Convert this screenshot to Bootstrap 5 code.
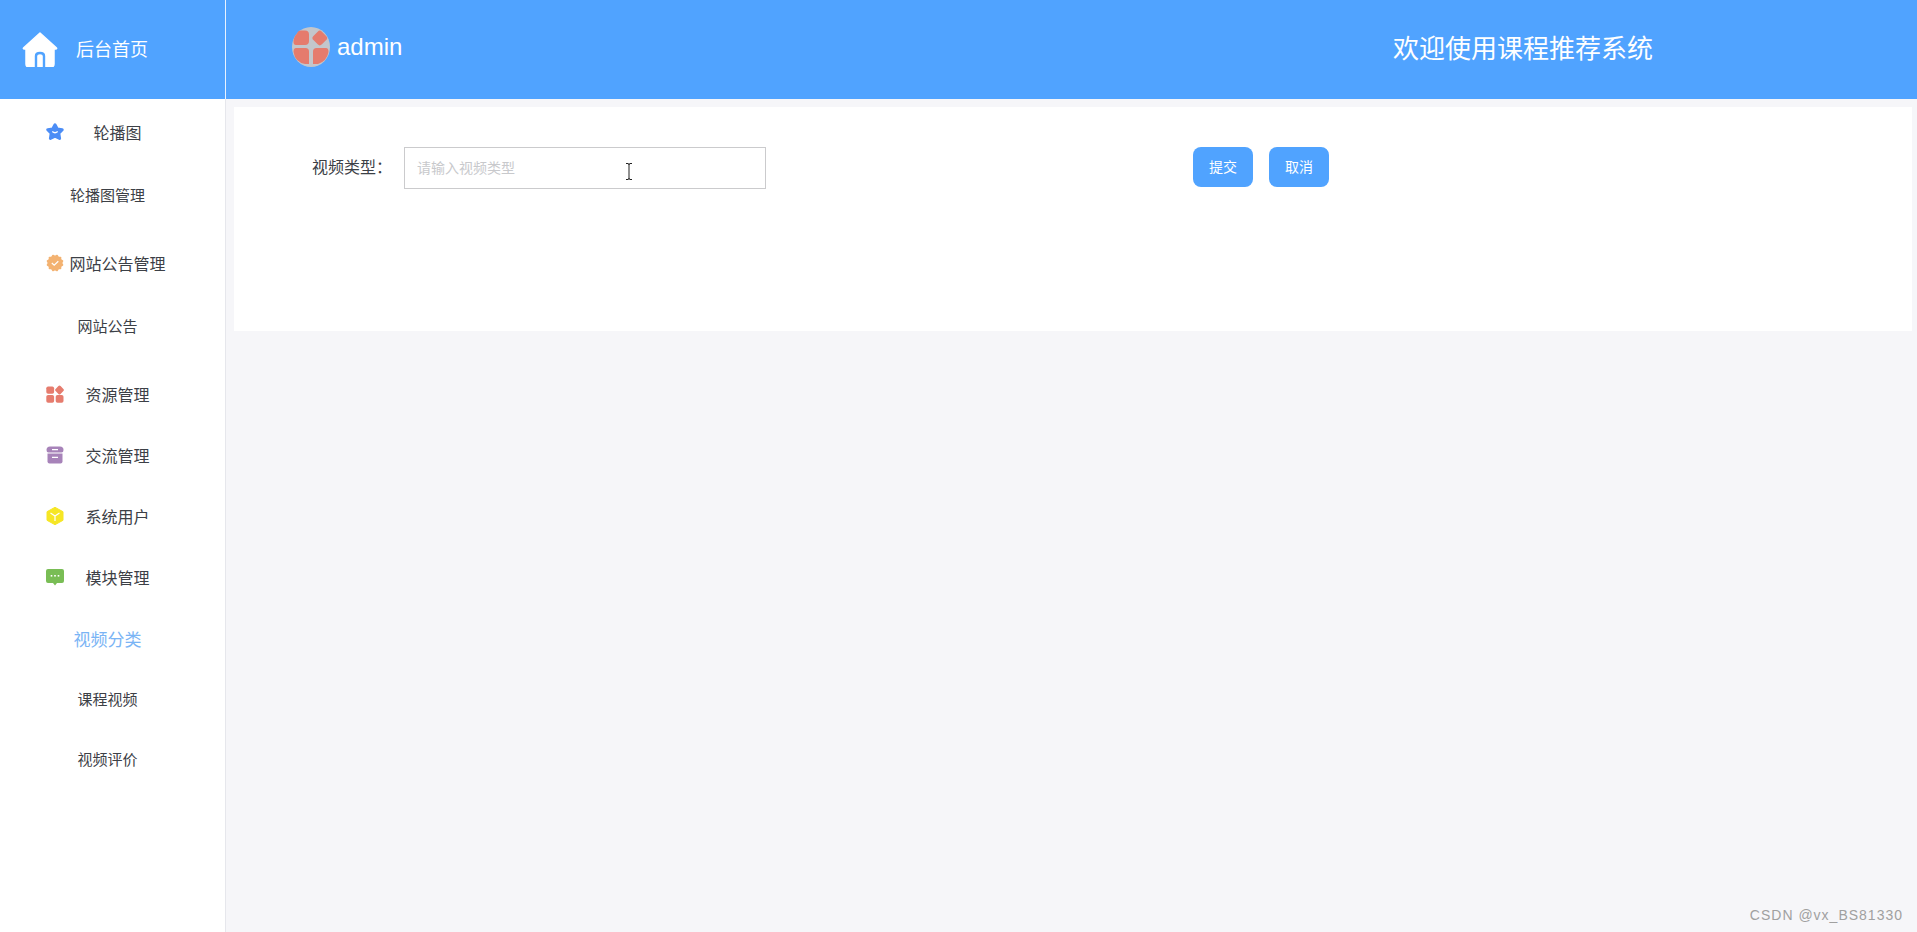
<!DOCTYPE html>
<html lang="zh-CN">
<head>
    <meta charset="UTF-8">
    <meta name="viewport" content="width=device-width, initial-scale=1.0">
    <title>后台首页</title>
    <link href="https://cdn.jsdelivr.net/npm/bootstrap@5.3.0/dist/css/bootstrap.min.css" rel="stylesheet">
    <style>
        body { font-family: "Liberation Sans", "Noto Sans CJK SC", sans-serif; background: #f6f6f9; color: #3c4046; }
        .top-bar { height: 99px; background: #50a3ff; color: #fff; }
        .brand-box { width: 226px; padding-left: 22px; padding-top: 1px; gap: 18px; font-size: 18px; border-right: 1px solid #e8f2ff; }
        .brand-box svg { margin-top: -3px; }
        .user-box { margin-left: 66px; gap: 7px; padding-bottom: 5px; font-size: 24px; }
        .top-title { margin-left: auto; margin-right: 264px; font-size: 26px; }
        .side-menu { width: 226px; background: #fff; border-right: 1px solid #e6e7ec; padding-top: 4px; }
        .menu-row { height: 61px; color: #3c4046; font-size: 16px; text-decoration: none; padding: 0; }
        .menu-tall { height: 62px; }
        .menu-short { height: 60px; }
        .menu-gap { margin-top: 7px; }
        .menu-top { padding-left: 46px; }
        .menu-top svg { width: 18px; height: 18px; flex: none; margin-top: -4px; }
        .menu-label { width: 107px; text-align: center; }
        .menu-sub { width: 215px; justify-content: center; font-size: 15px; }
        .menu-active { color: #7ab4f5; font-size: 17px; padding-top: 2px; }
        .main-area { padding: 8px 5px 0 8px; }
        .form-panel { height: 224px; background: #fff; padding: 40px 0 0 78px; }
        .field-label { width: 92px; height: 42px; font-size: 16px; }
        .field-wrap { width: 362px; }
        .type-input { height: 42px; border: 1px solid #cbcbcd; border-radius: 0; padding: 0 12px; font-size: 14px; }
        .type-input::placeholder { color: #c8c9cc; }
        .text-cursor { position: absolute; left: 221px; top: 16px; width: 8px; height: 17px; }
        .panel-btn { width: 60px; height: 40px; padding: 0; background: #50a3ff; color: #fff; border: 0; border-radius: 8px; font-size: 14px; }
        .btn-group-gap { margin-left: 427px; gap: 16px; }
        .water-mark { position: absolute; right: 14px; bottom: 6px; color: #a0a0a0; font-size: 14px; letter-spacing: 1px; }
    </style>
</head>
<body>
<div class="d-flex flex-column vh-100 overflow-hidden position-relative">
    <header class="top-bar d-flex align-items-stretch flex-shrink-0">
        <div class="brand-box d-flex align-items-center">
            <svg width="36" height="36" viewBox="0 0 36 36">
                <path d="M18 2 L34 16.5 Q35.5 18 33.5 18 L32 18 L32 33 Q32 36 29 36 L7 36 Q4 36 4 33 L4 18 L2.5 18 Q0.5 18 2 16.5 Z" fill="#fff" stroke="#fff" stroke-linejoin="round" stroke-width="1.5"/>
                <path d="M14 36 L14 25 Q14 22 18 22 Q22 22 22 25 L22 36" fill="none" stroke="#50a3ff" stroke-width="2.4"/>
            </svg>
            <span>后台首页</span>
        </div>
        <div class="user-box d-flex align-items-center">
            <svg width="38" height="40" viewBox="0 0 38 40">
                <ellipse cx="19" cy="20" rx="19" ry="20" fill="#c3c6cb"/>
                <path d="M5 6.500 Q6 3.500 9 3.500 L13 3.500 Q17 3.500 17 7.500 L17 14 Q17 18 13 18 L4 18 Q1.500 18 1.500 15 Q1.500 10 5 6.500 Z" fill="#e57b6d"/>
                <rect x="21.800" y="5" width="12" height="12" rx="3" fill="#e57b6d" transform="rotate(45 27.800 11)"/>
                <path d="M4 21 L13.500 21 Q17 21 17 24.500 L17 37 L13 37 Q3 35 1.500 25 Q1.500 21 4 21 Z" fill="#e57b6d"/>
                <path d="M21 24.500 Q21 21 24.500 21 L34 21 Q36.500 21 36.500 25 Q35 34 26 37 L21 37 Z" fill="#e57b6d"/>
            </svg>
            <span>admin</span>
        </div>
        <div class="top-title d-flex align-items-center">欢迎使用课程推荐系统</div>
    </header>
    <div class="d-flex flex-grow-1">
        <nav class="side-menu nav flex-column flex-nowrap flex-shrink-0">
            <a href="#" class="menu-row menu-tall menu-top d-flex align-items-center">
                <svg viewBox="0 0 18 18"><path d="M9 1.800 L11.300 5.900 L16.200 6.700 L12.800 10.300 L13.600 15.400 L9 13.200 L4.400 15.400 L5.200 10.300 L1.800 6.700 L6.700 5.900 Z" fill="#4c8df6" stroke="#4c8df6" stroke-width="3" stroke-linejoin="round"/><path d="M6.300 8.500 Q9 11 11.700 8.500" fill="none" stroke="#fff" stroke-width="1.200"/></svg>
                <span class="menu-label">轮播图</span>
            </a>
            <a href="#" class="menu-row menu-tall menu-sub d-flex align-items-center">轮播图管理</a>
            <a href="#" class="menu-row menu-tall menu-gap menu-top d-flex align-items-center">
                <svg viewBox="0 0 18 18"><g fill="#f3b271"><rect x="2.700" y="2.700" width="12.600" height="12.600" rx="0.800"/><rect x="2.700" y="2.700" width="12.600" height="12.600" rx="0.800" transform="rotate(30 9 9)"/><rect x="2.700" y="2.700" width="12.600" height="12.600" rx="0.800" transform="rotate(60 9 9)"/></g><path d="M5.800 9 L8.200 11.200 L12.300 7.200" fill="none" stroke="#fff" stroke-width="1.200"/></svg>
                <span class="menu-label">网站公告管理</span>
            </a>
            <a href="#" class="menu-row menu-tall menu-sub d-flex align-items-center">网站公告</a>
            <a href="#" class="menu-row menu-gap menu-top d-flex align-items-center">
                <svg viewBox="0 0 18 18"><g fill="#e67c6e"><rect x="0.300" y="1.500" width="7.800" height="7.300" rx="1.800"/><rect x="0.300" y="10" width="7.800" height="7.800" rx="1.800"/><rect x="9.700" y="10" width="7.800" height="7.800" rx="1.800"/><rect x="10" y="1.500" width="7" height="7" rx="1.500" transform="rotate(45 13.500 5)"/></g></svg>
                <span class="menu-label">资源管理</span>
            </a>
            <a href="#" class="menu-row menu-top d-flex align-items-center">
                <svg viewBox="0 0 18 18"><path d="M4 0.500 L14 0.500 Q17.500 0.500 17.500 4 Q17.500 6.500 15.500 6.500 L2.500 6.500 Q0.500 6.500 0.500 4 Q0.500 0.500 4 0.500 Z" fill="#a783b9"/><path d="M1.500 7.500 L16.500 7.500 L16.500 15.500 Q16.500 17.500 14.500 17.500 L3.500 17.500 Q1.500 17.500 1.500 15.500 Z" fill="#a783b9"/><path d="M6 3.600 L12 3.600 M6 11.400 L12 11.400" stroke="#fff" stroke-width="1.200"/></svg>
                <span class="menu-label">交流管理</span>
            </a>
            <a href="#" class="menu-row menu-top d-flex align-items-center">
                <svg viewBox="0 0 18 18"><polygon points="9,0.300 17,4.700 17,13.300 9,17.700 1,13.300 1,4.700" fill="#f6e625" stroke="#f6e625" stroke-linejoin="round"/><path d="M4.500 6 L9 9 L13.500 6 M9 9 L9 14" fill="none" stroke="#fff" stroke-width="1.200"/></svg>
                <span class="menu-label">系统用户</span>
            </a>
            <a href="#" class="menu-row menu-top d-flex align-items-center">
                <svg viewBox="0 0 18 18"><path d="M2 1 L16 1 Q18 1 18 3 L18 13 Q18 15 16 15 L11 15 L9 17.500 L7 15 L2 15 Q0 15 0 13 L0 3 Q0 1 2 1 Z" fill="#79bd55"/><g fill="#fff"><rect x="4.700" y="7" width="1.600" height="1.600"/><rect x="8.200" y="7" width="1.600" height="1.600"/><rect x="11.700" y="7" width="1.600" height="1.600"/></g></svg>
                <span class="menu-label">模块管理</span>
            </a>
            <a href="#" class="menu-row menu-sub menu-active d-flex align-items-center">视频分类</a>
            <a href="#" class="menu-row menu-short menu-sub d-flex align-items-center">课程视频</a>
            <a href="#" class="menu-row menu-short menu-sub d-flex align-items-center">视频评价</a>
        </nav>
        <main class="main-area flex-grow-1">
            <form class="form-panel d-flex align-items-start">
                <label class="field-label d-flex align-items-center">视频类型：</label>
                <div class="field-wrap position-relative">
                    <input type="text" class="type-input form-control" placeholder="请输入视频类型">
                    <svg class="text-cursor" viewBox="0 0 8 17"><path d="M1 0.500 L3 0.500 Q4 0.500 4 2 L4 15 Q4 16.500 3 16.500 L1 16.500 M7 0.500 L5 0.500 Q4 0.500 4 2 M4 15 Q4 16.500 5 16.500 L7 16.500" fill="none" stroke="#222" stroke-width="1"/></svg>
                </div>
                <div class="btn-group-gap d-flex">
                    <button type="button" class="btn panel-btn">提交</button>
                    <button type="button" class="btn panel-btn">取消</button>
                </div>
            </form>
        </main>
    </div>
    <div class="water-mark">CSDN @vx_BS81330</div>
</div>
<script src="https://cdn.jsdelivr.net/npm/bootstrap@5.3.0/dist/js/bootstrap.bundle.min.js"></script>
</body>
</html>
